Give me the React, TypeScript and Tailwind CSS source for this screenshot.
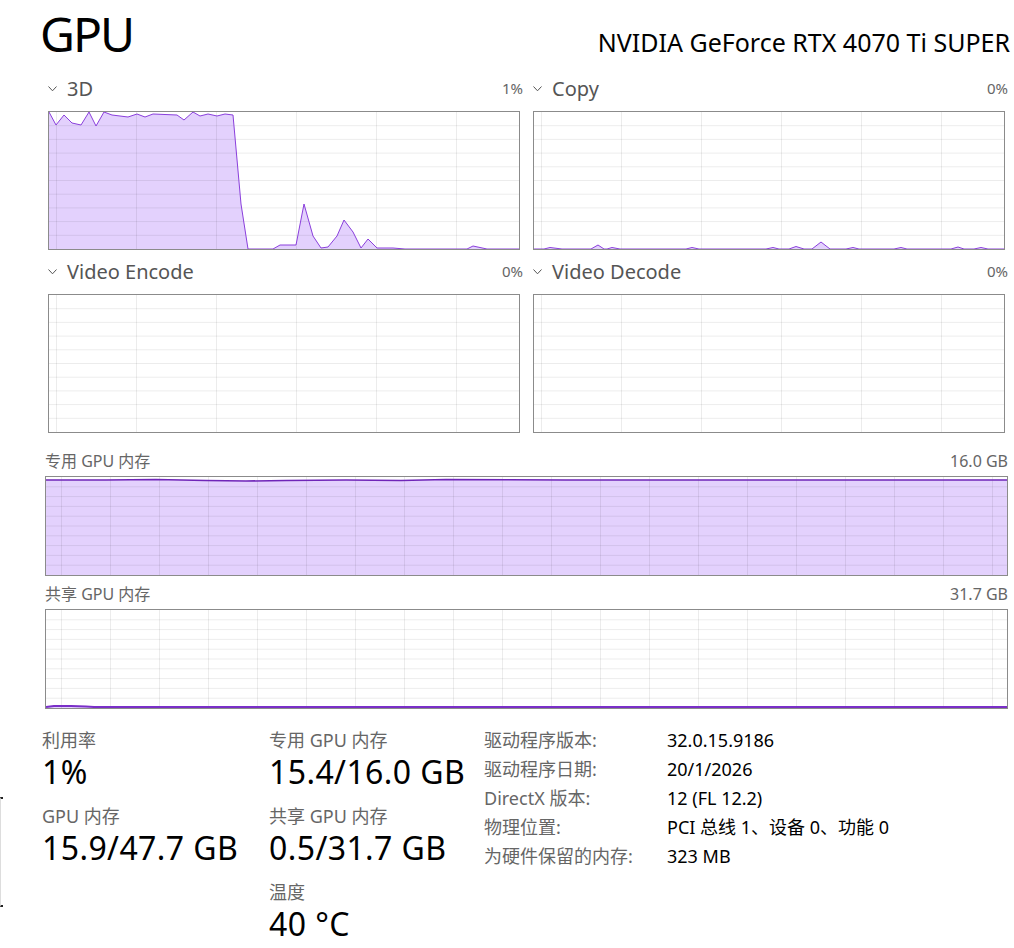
const FILL = "#e3d1fd";
const LINE = "#8a3fdc";

type ChartProps = {
  w: number;
  h: number;
  cols: number[];
  rows: number;
  area?: string;
  line?: string;
  lineColor?: string;
  lineWidth?: number;
};

function Chart({ w, h, cols, rows, area, line, lineColor = LINE, lineWidth = 1 }: ChartProps) {
  const rowLines = Array.from({ length: rows - 1 }, (_, i) => ((i + 1) * h) / rows);
  return (
    <div className="border border-[#8b8b8b] bg-white" style={{ width: w + 2, height: h + 2 }}>
      <svg width={w} height={h} className="block">
        {area && <polygon points={area} fill={FILL} />}
        {rowLines.map((y) => (
          <line key={"r" + y} x1={0} x2={w} y1={y} y2={y} stroke="rgba(0,0,0,0.075)" strokeWidth={1} />
        ))}
        {cols.map((x) => (
          <line key={"c" + x} x1={x} x2={x} y1={0} y2={h} stroke="rgba(0,0,0,0.075)" strokeWidth={1} />
        ))}
        {line && (
          <polyline points={line} fill="none" stroke={lineColor} strokeWidth={lineWidth} strokeLinejoin="round" />
        )}
      </svg>
    </div>
  );
}

const smallCols = [7.5, 87.5, 167.5, 247.5, 327.5, 407.5];
const memCols = Array.from({ length: 20 }, (_, i) => 15.5 + i * 49);

const d3 =
  "0,0 7,13 15,3 23,11 32,13 40,0 47,14 55,0 63,3 79,5 88,2 96,5 104,2 128,3 135,8 144,0 151,4 159,2 168,4 176,2 184,3 192,92 199,137 224,137 231,133 247,133 255,92 264,124 272,136 279,135 288,124 295,108 304,120 312,136 319,127 328,136 334,136 344,136 356,137 418,137 424,134 438,137 470,137";

const copy =
  "0,137 10,137 16,135.5 28,137 57,137 64,133 70,137 73,137 78,135.5 86,137 152,137 158,135.5 165,137 232,137 239,135.5 245,137 255,137 262,134.5 270,137 278,137 287,130 296,137 312,137 319,135.5 325,137 360,137 367,135.5 373,137 417,137 424,135 430,137 440,137 447,135.5 454,137 470,137";

const ded =
  "0,3 60,3 110,2.5 160,3.5 200,4 240,3.5 300,3 355,3.5 400,2.5 520,3 700,3 760,3 820,3 900,3 961,3";
const shared = "0,97 8,96 25,96 40,96.5 48,97 961,97";

function SectionLabel({ title, value }: { title: string; value: string }) {
  return (
    <div className="flex h-[22px] items-center justify-between">
      <div className="flex items-center">
        <svg width="9" height="6" viewBox="0 0 9 6" className="mr-[10px]">
          <polyline points="0.5,0.5 4.5,4.8 8.5,0.5" fill="none" stroke="#555" strokeWidth="1" />
        </svg>
        <span className="text-[20px] leading-[22px] text-[#555]">{title}</span>
      </div>
      <span className="text-[15px] text-[#666]">{value}</span>
    </div>
  );
}

function Stat({ label, value }: { label: string; value: string }) {
  return (
    <div className="mb-[12px]">
      <div className="h-[22px] text-[18px] leading-[22px] text-[#666]">{label}</div>
      <div className="h-[42px] text-[32px] leading-[42px] tracking-[0.4px] text-black">{value}</div>
    </div>
  );
}

const info: [string, string][] = [
  ["驱动程序版本:", "32.0.15.9186"],
  ["驱动程序日期:", "20/1/2026"],
  ["DirectX 版本:", "12 (FL 12.2)"],
  ["物理位置:", "PCI 总线 1、设备 0、功能 0"],
  ["为硬件保留的内存:", "323 MB"],
];

export default function App() {
  return (
    <div className="relative h-[948px] w-[1014px] overflow-hidden bg-white font-['Noto_Sans','Noto_Sans_CJK_SC',sans-serif]">
      <div className="absolute left-0 top-[797px] h-[110px] w-[3px] border-y-2 border-l border-y-[#222] border-l-[#ddd]" />

      <header className="flex items-baseline justify-between pl-[40px] pr-[4px] pt-[10px]">
        <h1 className="text-[48px] leading-[48px] tracking-[-2px] text-black">GPU</h1>
        <span className="text-[25px] text-black">NVIDIA GeForce RTX 4070 Ti SUPER</span>
      </header>

      <div className="ml-[48px] mt-[16px] grid w-[960px] grid-cols-2 gap-x-[10px] gap-y-[11px]">
        <div className="flex flex-col gap-[11px]">
          <SectionLabel title="3D" value="1%" />
          <Chart w={470} h={137} cols={smallCols} rows={10} area={d3 + " 470,137 0,137"} line={d3} />
        </div>
        <div className="flex flex-col gap-[11px]">
          <SectionLabel title="Copy" value="0%" />
          <Chart w={470} h={137} cols={smallCols} rows={10} area={copy} line={copy} />
        </div>
        <div className="flex flex-col gap-[11px]">
          <SectionLabel title="Video Encode" value="0%" />
          <Chart w={470} h={137} cols={smallCols} rows={10} />
        </div>
        <div className="flex flex-col gap-[11px]">
          <SectionLabel title="Video Decode" value="0%" />
          <Chart w={470} h={137} cols={smallCols} rows={10} />
        </div>
      </div>

      <div className="ml-[45px] mt-[19px] w-[963px]">
        <div className="flex h-[18px] items-center justify-between text-[16px] text-[#666]">
          <span>专用 GPU 内存</span>
          <span>16.0 GB</span>
        </div>
        <div className="mt-[6px]">
          <Chart w={961} h={98} cols={memCols} rows={10} area={ded + " 961,98 0,98"} line={ded} lineColor="#6f25b8" lineWidth={1.5} />
        </div>
        <div className="mt-[9px] flex h-[18px] items-center justify-between text-[16px] text-[#666]">
          <span>共享 GPU 内存</span>
          <span>31.7 GB</span>
        </div>
        <div className="mt-[6px]">
          <Chart w={961} h={98} cols={memCols} rows={10} area={shared + " 961,98 0,98"} line={shared} lineColor="#7a2fc8" lineWidth={2} />
        </div>
      </div>

      <div className="mt-[20px] flex pl-[42px]">
        <div className="w-[227px]">
          <Stat label="利用率" value="1%" />
          <Stat label="GPU 内存" value="15.9/47.7 GB" />
        </div>
        <div className="w-[215px]">
          <Stat label="专用 GPU 内存" value="15.4/16.0 GB" />
          <Stat label="共享 GPU 内存" value="0.5/31.7 GB" />
          <Stat label="温度" value="40 °C" />
        </div>
        <div className="-mt-[3px] grid auto-rows-[29px] grid-cols-[183px_auto] items-center text-[18px]">
          {info.map(([k, v]) => (
            <div key={k} className="contents">
              <span className="text-[#666]">{k}</span>
              <span className="text-black">{v}</span>
            </div>
          ))}
        </div>
      </div>
    </div>
  );
}
